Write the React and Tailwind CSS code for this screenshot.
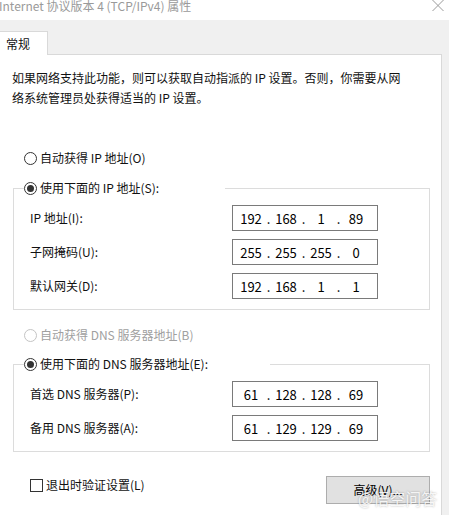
import { Fragment } from 'react';

const font = "font-['Noto_Sans_CJK_SC','Noto_Sans',sans-serif]";

function Radio({ checked, disabled }) {
  return (
    <span
      className={
        disabled
          ? 'w-[13px] h-[13px] rounded-full border border-[#c4c4c4] bg-white shrink-0 flex items-center justify-center'
          : 'w-[13px] h-[13px] rounded-full border border-[#333] bg-white shrink-0 flex items-center justify-center'
      }
    >
      {checked && <span className="w-[7px] h-[7px] rounded-full bg-[#333]" />}
    </span>
  );
}

function IpBox({ parts }) {
  return (
    <div className="w-[146px] h-[26px] border border-[#7a7a7a] bg-white flex items-center pl-[3px] text-[13px] text-black leading-none">
      {parts.map((p, i) => (
        <Fragment key={i}>
          {i > 0 && <span className="w-[5px] text-center">.</span>}
          <span className="w-[30px] text-center">{p}</span>
        </Fragment>
      ))}
    </div>
  );
}

function Row({ label, parts }) {
  return (
    <div className="flex items-center pl-[16px]">
      <span className="w-[202px]">{label}</span>
      <IpBox parts={parts} />
    </div>
  );
}

function Group({ title, legendWidth, children }) {
  return (
    <div className="ml-[13px] mr-[11px] border border-[#dcdcdc] pb-[10px]">
      <div className={`-mt-[11px] ml-[10px] h-[20px] bg-white flex items-center gap-[3px] ${legendWidth}`}>
        <Radio checked />
        <span>{title}</span>
      </div>
      <div className="mt-[7px] flex flex-col gap-[8px]">{children}</div>
    </div>
  );
}

export default function App() {
  return (
    <div className={`relative w-[449px] h-[515px] overflow-hidden bg-[#f0f0f0] flex flex-col text-[12px] text-[#111] ${font}`}>
      {/* title bar */}
      <div className="h-[20px] bg-white flex items-start justify-between shrink-0">
        <span className="-ml-[1px] -mt-[1px] leading-[14px] text-[12px] text-[#9a9a9a] whitespace-nowrap">Internet 协议版本 4 (TCP/IPv4) 属性</span>
        <svg width="12" height="11" viewBox="0 0 12 11" className="mr-[5px]" fill="none" stroke="#9a9a9a" strokeWidth="1">
          <path d="M0.5 0 L11.5 11 M11.5 0 L0.5 11" />
        </svg>
      </div>

      <div className="pt-[11px] flex-1 flex flex-col">
        <div className="relative z-10 w-[48px] h-[24px] bg-white border-t border-r border-[#d9d9d9] flex items-center pl-[6px] leading-none">
          常规
        </div>

        <div className="-mt-[1px] w-[442px] flex-1 bg-white border-t border-r border-[#d9d9d9] flex flex-col">
          <p className="mt-[13px] px-[12px] leading-[20px] whitespace-nowrap">
            如果网络支持此功能，则可以获取自动指派的 IP 设置。否则，你需要从网
            <br />
            络系统管理员处获得适当的 IP 设置。
          </p>

          <div className="mt-[40px] ml-[24px] h-[20px] flex items-center gap-[3px]">
            <Radio />
            <span>自动获得 IP 地址(O)</span>
          </div>

          <div className="mt-[20px]">
            <Group title="使用下面的 IP 地址(S):" legendWidth="w-[201px]">
              <Row label="IP 地址(I):" parts={['192', '168', '1', '89']} />
              <Row label="子网掩码(U):" parts={['255', '255', '255', '0']} />
              <Row label="默认网关(D):" parts={['192', '168', '1', '1']} />
            </Group>
          </div>

          <div className="mt-[15px] ml-[24px] h-[20px] flex items-center gap-[3px] text-[#a0a0a0]">
            <Radio disabled />
            <span>自动获得 DNS 服务器地址(B)</span>
          </div>

          <div className="mt-[19px]">
            <Group title="使用下面的 DNS 服务器地址(E):" legendWidth="w-[246px]">
              <Row label="首选 DNS 服务器(P):" parts={['61', '128', '128', '69']} />
              <Row label="备用 DNS 服务器(A):" parts={['61', '129', '129', '69']} />
            </Group>
          </div>

          <div className="mt-[23px] flex items-start justify-between mr-[11px]">
            <div className="ml-[30px] h-[20px] flex items-center gap-[3px]">
              <span className="w-[13px] h-[13px] border border-[#333] bg-white shrink-0" />
              <span>退出时验证设置(L)</span>
            </div>
            <button
              type="button"
              className="mt-[1px] w-[104px] h-[28px] bg-[#e1e1e1] border border-[#adadad] text-[12px] text-black leading-none"
            >
              高级(V)...
            </button>
          </div>
        </div>
      </div>

      {/* watermark */}
      <div className="absolute left-[358px] top-[490px] text-[16px] leading-none text-white/85 [text-shadow:0_0_2px_rgba(0,0,0,0.35)]">
        @悟空问答
      </div>

      <div className="absolute top-[20px] right-0 w-[7px] h-[495px] bg-[#f0f0f0]" />
    </div>
  );
}
